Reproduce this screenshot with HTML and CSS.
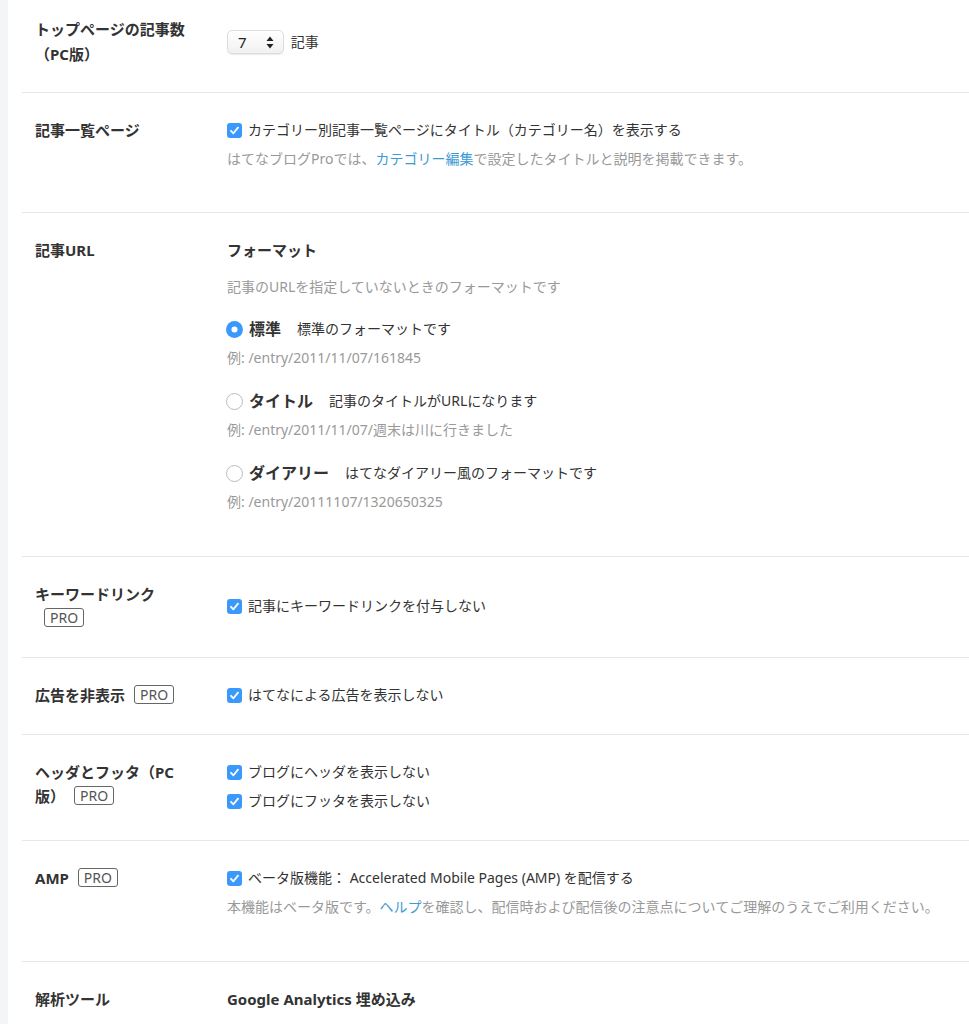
FILE: index.html
```html
<!DOCTYPE html>
<html lang="ja">
<head>
    <meta charset="UTF-8">
    <meta name="viewport" content="width=device-width, initial-scale=1.0">
    <title>詳細設定</title>
    <link rel="stylesheet" href="styles.css">
</head>
<body>
    <div class="main">
        <div class="row row-center row-first">
            <div class="label">トップページの記事数（PC版）</div>
            <div class="control">
                <span class="select-wrap">
                    <select class="select">
                        <option>7</option>
                    </select>
                    <svg class="select-arrows" width="8" height="13" viewBox="0 0 8 13"><path d="M4 0.5 L7.5 5 H0.5 Z M4 12.5 L7.5 8 H0.5 Z" fill="#222"/></svg>
                </span>
                <span class="unit">記事</span>
            </div>
        </div>

        <div class="row">
            <div class="label">記事一覧ページ</div>
            <div class="control">
                <label class="check">
                    <svg class="checkbox" width="15" height="15" viewBox="0 0 15 15"><rect width="15" height="15" rx="3" fill="#3b99fc"/><path d="M4 7.8 L6.4 10.3 L11 4.6" fill="none" stroke="#fff" stroke-width="1.8" stroke-linecap="round" stroke-linejoin="round"/></svg>
                    カテゴリー別記事一覧ページにタイトル（カテゴリー名）を表示する
                </label>
                <p class="help help-short">はてなブログProでは、<a href="#">カテゴリー編集</a>で設定したタイトルと説明を掲載できます。</p>
            </div>
        </div>

        <div class="row">
            <div class="label">記事URL</div>
            <div class="control">
                <div class="sub-title">フォーマット</div>
                <p class="note">記事のURLを指定していないときのフォーマットです</p>

                <label class="radio">
                    <svg class="radio-mark" width="17" height="17" viewBox="0 0 17 17"><circle cx="8.5" cy="8.5" r="8.5" fill="#3b99fc"/><circle cx="8.5" cy="8.5" r="3" fill="#fff"/></svg>
                    <strong>標準</strong>
                    <span class="radio-desc">標準のフォーマットです</span>
                </label>
                <p class="example">例: /entry/2011/11/07/161845</p>

                <label class="radio">
                    <svg class="radio-mark" width="17" height="17" viewBox="0 0 17 17"><circle cx="8.5" cy="8.5" r="8" fill="#fff" stroke="#bdbdbd"/></svg>
                    <strong>タイトル</strong>
                    <span class="radio-desc">記事のタイトルがURLになります</span>
                </label>
                <p class="example">例: /entry/2011/11/07/週末は川に行きました</p>

                <label class="radio">
                    <svg class="radio-mark" width="17" height="17" viewBox="0 0 17 17"><circle cx="8.5" cy="8.5" r="8" fill="#fff" stroke="#bdbdbd"/></svg>
                    <strong>ダイアリー</strong>
                    <span class="radio-desc">はてなダイアリー風のフォーマットです</span>
                </label>
                <p class="example last">例: /entry/20111107/1320650325</p>
            </div>
        </div>

        <div class="row row-center">
            <div class="label">キーワードリンク <span class="pro">PRO</span></div>
            <div class="control">
                <label class="check">
                    <svg class="checkbox" width="15" height="15" viewBox="0 0 15 15"><rect width="15" height="15" rx="3" fill="#3b99fc"/><path d="M4 7.8 L6.4 10.3 L11 4.6" fill="none" stroke="#fff" stroke-width="1.8" stroke-linecap="round" stroke-linejoin="round"/></svg>
                    記事にキーワードリンクを付与しない
                </label>
            </div>
        </div>

        <div class="row">
            <div class="label">広告を非表示<span class="pro">PRO</span></div>
            <div class="control">
                <label class="check">
                    <svg class="checkbox" width="15" height="15" viewBox="0 0 15 15"><rect width="15" height="15" rx="3" fill="#3b99fc"/><path d="M4 7.8 L6.4 10.3 L11 4.6" fill="none" stroke="#fff" stroke-width="1.8" stroke-linecap="round" stroke-linejoin="round"/></svg>
                    はてなによる広告を表示しない
                </label>
            </div>
        </div>

        <div class="row">
            <div class="label">ヘッダとフッタ（PC版）<span class="pro">PRO</span></div>
            <div class="control">
                <label class="check">
                    <svg class="checkbox" width="15" height="15" viewBox="0 0 15 15"><rect width="15" height="15" rx="3" fill="#3b99fc"/><path d="M4 7.8 L6.4 10.3 L11 4.6" fill="none" stroke="#fff" stroke-width="1.8" stroke-linecap="round" stroke-linejoin="round"/></svg>
                    ブログにヘッダを表示しない
                </label>
                <label class="check">
                    <svg class="checkbox" width="15" height="15" viewBox="0 0 15 15"><rect width="15" height="15" rx="3" fill="#3b99fc"/><path d="M4 7.8 L6.4 10.3 L11 4.6" fill="none" stroke="#fff" stroke-width="1.8" stroke-linecap="round" stroke-linejoin="round"/></svg>
                    ブログにフッタを表示しない
                </label>
            </div>
        </div>

        <div class="row">
            <div class="label">AMP<span class="pro">PRO</span></div>
            <div class="control">
                <label class="check">
                    <svg class="checkbox" width="15" height="15" viewBox="0 0 15 15"><rect width="15" height="15" rx="3" fill="#3b99fc"/><path d="M4 7.8 L6.4 10.3 L11 4.6" fill="none" stroke="#fff" stroke-width="1.8" stroke-linecap="round" stroke-linejoin="round"/></svg>
                    ベータ版機能： Accelerated Mobile Pages (AMP) を配信する
                </label>
                <p class="help">本機能はベータ版です。<a href="#">ヘルプ</a>を確認し、配信時および配信後の注意点についてご理解のうえでご利用ください。</p>
            </div>
        </div>

        <div class="row">
            <div class="label">解析ツール</div>
            <div class="control">
                <div class="sub-title">Google Analytics 埋め込み</div>
            </div>
        </div>
    </div>
</body>
</html>
```

FILE: styles.css
```css
body {
    margin: 0;
    background-color: #f4f5f6;
    color: #333;
    font-family: "Noto Sans", "Noto Sans CJK JP", sans-serif;
    font-size: 14px;
    line-height: 24px;
}
.main {
    margin-left: 8px;
    padding-left: 14px;
    background-color: #fff;
    min-height: 100vh;
}
.row {
    display: grid;
    grid-template-columns: 192px 1fr;
    align-items: start;
    padding: 25px 0 27px 13px;
    border-top: 1px solid #e3e7ea;
}
.row-first {
    border-top: none;
    padding-top: 17px;
    padding-bottom: 25px;
}
.row-first .label {
    line-height: 25px;
}
.row-center {
    align-items: center;
}
.label {
    padding-right: 40px;
    font-size: 15px;
    font-weight: bold;
    line-height: 24px;
    color: #333;
}
.pro {
    display: inline-block;
    margin-left: 9px;
    padding: 0 5px;
    border: 1px solid #666;
    border-radius: 3px;
    font-size: 14px;
    font-weight: normal;
    line-height: 17px;
    color: #555;
    vertical-align: 1px;
}
.control p {
    margin: 0;
}
.select-wrap {
    position: relative;
    display: inline-block;
    vertical-align: middle;
}
.select {
    appearance: none;
    -webkit-appearance: none;
    width: 57px;
    height: 24px;
    padding: 0 0 0 10px;
    border: 1px solid #dcdcdc;
    border-radius: 5px;
    background: linear-gradient(#fff, #f1f1f1);
    box-shadow: 0 1px 1px rgba(0, 0, 0, 0.08);
    font-family: inherit;
    font-size: 15px;
    color: #222;
}
.select-arrows {
    position: absolute;
    right: 10px;
    top: 6px;
    pointer-events: none;
}
.unit {
    margin-left: 3px;
    vertical-align: middle;
}
.check {
    display: flex;
    align-items: center;
    gap: 6px;
    line-height: 24px;
}
.check + .check {
    margin-top: 5px;
}
.checkbox {
    flex: none;
}
.help {
    margin-top: 5px !important;
    margin-bottom: 15px !important;
    color: #999;
}
.help-short {
    margin-bottom: 14px !important;
}
.help a {
    color: #3d9ad6;
    text-decoration: none;
}
.sub-title {
    font-size: 15px;
    font-weight: bold;
}
.note {
    margin-top: 13px !important;
    color: #999;
}
.radio {
    display: flex;
    align-items: center;
    margin-top: 18px;
    margin-left: -1px;
}
.example + .radio {
    margin-top: 19px;
}
.radio-mark {
    flex: none;
    margin-right: 6px;
}
.radio strong {
    font-size: 16px;
}
.radio-desc {
    margin-left: 16px;
}
.example {
    margin-top: 5px !important;
    color: #999;
}
.example.last {
    margin-bottom: 15px !important;
}
```
